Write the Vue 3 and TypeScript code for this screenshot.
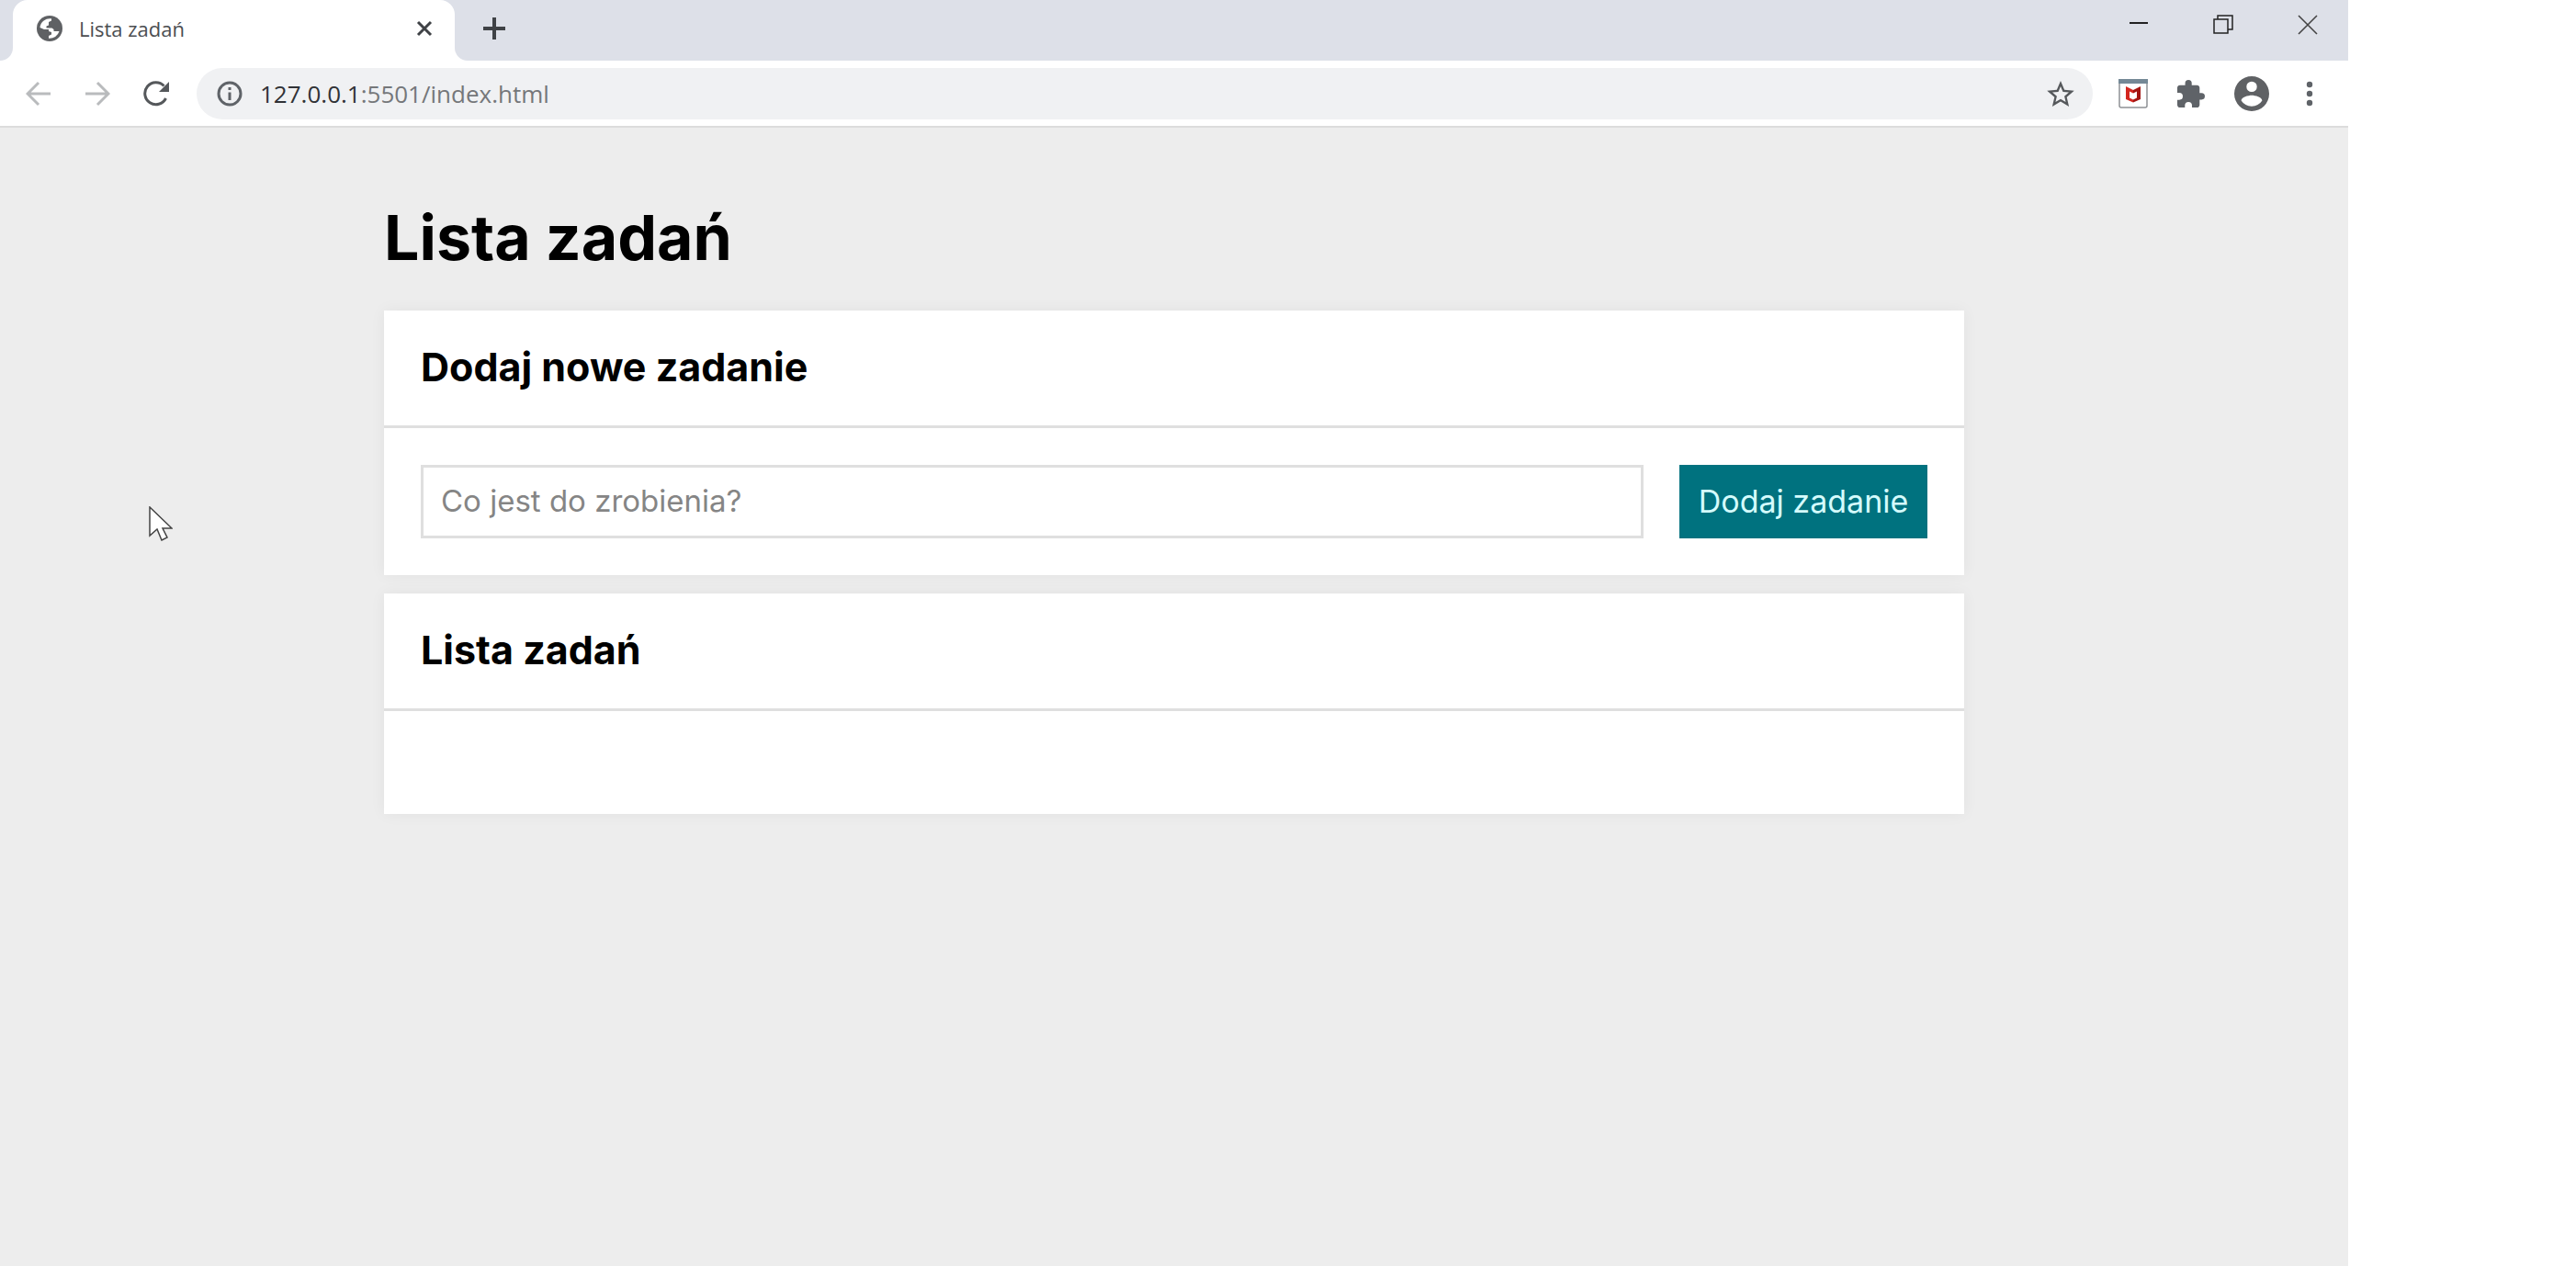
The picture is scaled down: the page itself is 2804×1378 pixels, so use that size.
<script setup lang="ts">
import { ref } from 'vue'

const task = ref('')
const address = '127.0.0.1'
const path = ':5501/index.html'
</script>

<template>
  <div class="browser">
    <header class="tabs">
      <div class="edge"></div>
      <div class="tab">
        <svg viewBox="0 0 28 28" width="28" height="28"><circle cx="14" cy="14" r="14" fill="#5f6164"/><path fill="#fff" d="M3.500 13A10.800 10.800 0 0 1 16 3.300v2.200l-3 1.500v3.500l-2.500 1v2h6l2 1.500v2h6A10.800 10.800 0 0 1 13 24.700V22l3-1.500V18l-3-1v-2H8z"/></svg>
        <span class="title">Lista zadań</span>
        <button class="icon" aria-label="Zamknij kartę"><svg viewBox="0 0 18 18" width="18" height="18"><path d="M2 2l14 14M16 2L2 16" stroke="#3f4246" stroke-width="3"/></svg></button>
      </div>
      <button class="icon plus" aria-label="Nowa karta"><svg viewBox="0 0 24 24" width="24" height="24"><path d="M12 0v24M0 12h24" stroke="#3f4246" stroke-width="4"/></svg></button>
      <div class="controls">
        <button class="icon" aria-label="Minimalizuj"><svg viewBox="0 0 22 22" width="22" height="22"><path d="M1 9h20" stroke="#222" stroke-width="2"/></svg></button>
        <button class="icon" aria-label="Przywróć"><svg viewBox="0 0 22 22" width="22" height="22"><path d="M1 5h15v15H1zM5 5V1h16v15h-5" fill="none" stroke="#222" stroke-width="1.500"/></svg></button>
        <button class="icon" aria-label="Zamknij"><svg viewBox="0 0 22 22" width="22" height="22"><path d="M1 1l20 20M21 1L1 21" stroke="#444" stroke-width="1.600"/></svg></button>
      </div>
    </header>

    <div class="toolbar">
      <button class="icon" aria-label="Wstecz"><svg viewBox="0 0 28 28" width="28" height="28"><path d="M27 14H3M14 2L2 14l12 12" fill="none" stroke="#b9bbbd" stroke-width="3"/></svg></button>
      <button class="icon" aria-label="Dalej"><svg viewBox="0 0 28 28" width="28" height="28"><path d="M1 14h24M14 2l12 12-12 12" fill="none" stroke="#b9bbbd" stroke-width="3"/></svg></button>
      <button class="icon" aria-label="Odśwież"><svg viewBox="0 0 28 28" width="28" height="28"><path d="M24.500 19A12 12 0 1 1 22.500 5.500" fill="none" stroke="#55585b" stroke-width="3"/><path d="M28 1v11H17z" fill="#55585b"/></svg></button>
      <div class="omnibox">
        <svg viewBox="0 0 28 28" width="28" height="28"><circle cx="14" cy="14" r="12" fill="none" stroke="#5f6368" stroke-width="3"/><path d="M14 12.500V21M14 7v3" stroke="#5f6368" stroke-width="3"/></svg>
        <span class="url"><b>{{ address }}</b>{{ path }}</span>
        <button class="icon" aria-label="Dodaj do zakładek"><svg viewBox="2 2 20 19" width="30" height="28"><path fill="#55585b" d="M22 9.240l-7.190-.62L12 2 9.190 8.630 2 9.240l5.460 4.730L5.820 21 12 17.270 18.180 21l-1.630-7.030zM12 15.400l-3.760 2.270 1-4.280-3.320-2.880 4.380-.38L12 6.100l1.710 4.040 4.380.38-3.320 2.880 1 4.280z"/></svg></button>
      </div>
      <div class="extensions">
        <button class="icon" aria-label="McAfee"><svg viewBox="0 0 32 32" width="32" height="32"><rect x="1" y="1" width="30" height="30" rx="2" fill="#fff" stroke="#8e9195" stroke-width="1.500"/><path d="M0 0h32v5H0z" fill="#748896"/><path d="M8 8l8 4v3.500L12 13.500v7l4 2v3l-8-3.500z" fill="#d3261f"/><path d="M24 8l-8 4v3.500l4-2v7l-4 2v3l8-3.500z" fill="#a31512"/></svg></button>
        <button class="icon" aria-label="Rozszerzenia"><svg viewBox="2 1 21 21" width="30" height="30"><path fill="#5f6368" d="M20.500 11H19V7c0-1.100-.9-2-2-2h-4V3.500a2.500 2.500 0 0 0-5 0V5H4c-1.100 0-2 .9-2 2v3.800h1.500a2.700 2.700 0 0 1 0 5.400H2V20c0 1.100.9 2 2 2h3.800v-1.500a2.700 2.700 0 0 1 5.400 0V22H17c1.100 0 2-.9 2-2v-4h1.500a2.500 2.500 0 0 0 0-5z"/></svg></button>
        <button class="icon" aria-label="Profil"><svg viewBox="2 2 20 20" width="38" height="38"><path fill="#5f6164" d="M12 2a10 10 0 1 0 0 20 10 10 0 0 0 0-20zm0 3a3 3 0 1 1 0 6 3 3 0 0 1 0-6zm0 14.200a7.200 7.200 0 0 1-6-3.220c.03-1.990 4-3.080 6-3.080s5.970 1.090 6 3.080a7.200 7.200 0 0 1-6 3.220z"/></svg></button>
        <button class="icon" aria-label="Menu"><svg viewBox="0 0 8 28" width="8" height="28"><g fill="#5f6368"><circle cx="4" cy="4" r="3.200"/><circle cx="4" cy="14" r="3.200"/><circle cx="4" cy="24" r="3.200"/></g></svg></button>
      </div>
    </div>

    <main class="page">
      <div class="container">
        <h1>Lista zadań</h1>
        <section class="card">
          <h2>Dodaj nowe zadanie</h2>
          <form class="body" @submit.prevent>
            <input v-model="task" type="text" placeholder="Co jest do zrobienia?" aria-label="Co jest do zrobienia?">
            <button type="submit" class="add">Dodaj zadanie</button>
          </form>
        </section>
        <section class="card">
          <h2>Lista zadań</h2>
          <div class="body empty"></div>
        </section>
      </div>
      <svg class="pointer" viewBox="0 0 26 38" width="26" height="38"><path d="M1 1v31l8-7 5 12 6-3-5-10h10z" fill="#fff" stroke="#444" stroke-width="1.500"/></svg>
    </main>
  </div>
</template>

<style>
body {
  margin: 0;
  background: #fff;
}
</style>

<style scoped>
* {
  box-sizing: border-box;
}
.browser {
  display: flex;
  flex-direction: column;
  min-height: 100vh;
  margin-right: 248px;
  font-family: "Open Sans", sans-serif;
}
.icon {
  display: flex;
  padding: 0;
  border: 0;
  background: none;
}
svg {
  display: block;
  flex: none;
}
.tabs {
  display: flex;
  height: 66px;
  background: #fff;
}
.edge {
  width: 14px;
  background: #dde0e8;
  border-bottom-right-radius: 14px;
}
.tab {
  display: flex;
  align-items: center;
  width: 481px;
  padding: 0 24px 4px 26px;
  background: linear-gradient(#dde0e8, #dde0e8) top / 100% 20px no-repeat;
  position: relative;
  z-index: 0;
}
.tab::before {
  content: "";
  position: absolute;
  inset: 0;
  z-index: -1;
  background: #fff;
  border-radius: 16px 16px 0 0;
}
.title {
  flex: 1;
  margin-left: 18px;
  font-size: 22px;
  color: #4c4e52;
}
.plus {
  flex: 1;
  padding: 19px 0 0 31px;
  background: #dde0e8;
  border-bottom-left-radius: 14px;
}
.controls {
  display: flex;
  gap: 70px;
  padding: 16px 33px 0 0;
  background: #dde0e8;
}
.toolbar {
  display: flex;
  align-items: center;
  height: 73px;
  padding: 0 38px 0 28px;
  gap: 36px;
  background: #fff;
  border-bottom: 2px solid #dcdcdc;
}
.omnibox {
  display: flex;
  flex: 1;
  align-items: center;
  height: 56px;
  margin-left: -6px;
  padding: 0 20px 0 22px;
  border-radius: 28px;
  background: #f0f1f3;
}
.url {
  flex: 1;
  margin-left: 19px;
  font-size: 26px;
  color: #75777a;
}
.url b {
  font-weight: 400;
  color: #303236;
}
.extensions {
  display: flex;
  align-items: center;
  gap: 32px;
  margin-left: -8px;
}
.extensions .icon:last-child {
  margin-left: 8px;
}
.page {
  flex: 1;
  position: relative;
  padding: 72px 40px;
  background: #ededed;
  font-family: Inter, sans-serif;
}
.container {
  max-width: 1720px;
  margin: 0 auto;
}
h1 {
  margin: 0 0 33px;
  font-size: 68px;
  line-height: 94px;
}
.card {
  margin-bottom: 20px;
  background: #fff;
  box-shadow: 0 0 16px rgba(0, 0, 0, 0.05);
}
h2 {
  margin: 0;
  padding: 31px 40px 33px;
  border-bottom: 3px solid #dfdfdf;
  font-size: 43px;
  line-height: 61px;
}
.body {
  display: flex;
  gap: 39px;
  padding: 40px;
}
.empty {
  min-height: 112px;
}
input {
  flex: 1;
  min-width: 0;
  height: 80px;
  padding: 0 19px 2px;
  border: 3px solid #dfdfdf;
  font: 33px Inter, sans-serif;
}
input::placeholder {
  color: #858585;
}
.add {
  width: 270px;
  height: 80px;
  padding: 0 0 2px;
  border: 0;
  background: #00727f;
  color: #d4fbfc;
  font: 34px Inter, sans-serif;
}
.pointer {
  position: absolute;
  top: 412px;
  left: 162px;
}
</style>
